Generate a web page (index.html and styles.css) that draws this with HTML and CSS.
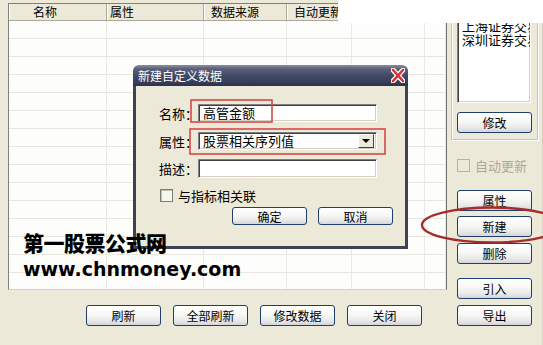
FILE: index.html
```html
<!DOCTYPE html>
<html lang="zh">
<head>
<meta charset="utf-8">
<link rel="stylesheet" href="styles.css">
</head>
<body>
<div class="app">
  <div class="left">
    <div class="table">
      <div class="thead">
        <div class="th c1">名称</div>
        <div class="th c2">属性</div>
        <div class="th c3">数据来源</div>
        <div class="th c4">自动更新</div>
        <div class="th"></div>
        <div class="th"></div>
      </div>
      <div class="tr"><i></i><i></i><i></i><i></i><i></i><i></i></div>
      <div class="tr"><i></i><i></i><i></i><i></i><i></i><i></i></div>
      <div class="tr"><i></i><i></i><i></i><i></i><i></i><i></i></div>
      <div class="tr"><i></i><i></i><i></i><i></i><i></i><i></i></div>
      <div class="tr"><i></i><i></i><i></i><i></i><i></i><i></i></div>
      <div class="tr"><i></i><i></i><i></i><i></i><i></i><i></i></div>
      <div class="tr"><i></i><i></i><i></i><i></i><i></i><i></i></div>
      <div class="tr"><i></i><i></i><i></i><i></i><i></i><i></i></div>
      <div class="tr"><i></i><i></i><i></i><i></i><i></i><i></i></div>
      <div class="tr"><i></i><i></i><i></i><i></i><i></i><i></i></div>
      <div class="tr"><i></i><i></i><i></i><i></i><i></i><i></i></div>
      <div class="tr"><i></i><i></i><i></i><i></i><i></i><i></i></div>
      <div class="tr"><i></i><i></i><i></i><i></i><i></i><i></i></div>
      <div class="tr"><i></i><i></i><i></i><i></i><i></i><i></i></div>
      <div class="tr"><i></i><i></i><i></i><i></i><i></i><i></i></div>
    </div>
    <div class="bottombar">
      <button class="btn">刷新</button>
      <button class="btn">全部刷新</button>
      <button class="btn">修改数据</button>
      <button class="btn">关闭</button>
    </div>
  </div>
  <div class="right">
    <div class="group">
      <div class="listbox">
        <div>上海证券交易所</div>
        <div>深圳证券交易所</div>
      </div>
      <button class="btn">修改</button>
    </div>
    <label class="chk disabled"><span class="box"></span>自动更新</label>
    <button class="btn b-attr">属性</button>
    <button class="btn b-new">新建</button>
    <button class="btn b-del">删除</button>
    <button class="btn b-imp">引入</button>
    <button class="btn b-exp">导出</button>
  </div>
</div>

<div class="patch"></div>

<div class="dialog">
  <div class="titlebar">
    <span class="title">新建自定义数据</span>
    <svg class="close" width="14" height="15" viewBox="0 0 14 15">
      <path d="M2 2 L12 13 M12 2 L2 13" stroke="#ffffff" stroke-width="5" stroke-linecap="round"/>
      <path d="M2 2 L12 13 M12 2 L2 13" stroke="#d8302c" stroke-width="2.6" stroke-linecap="round"/>
    </svg>
  </div>
  <div class="dbody">
    <div class="frow r1">
      <span class="flabel">名称：</span>
      <div class="field">高管金额</div>
    </div>
    <div class="frow r2">
      <span class="flabel">属性：</span>
      <div class="field select">股票相关序列值<span class="drop"><span class="tri"></span></span></div>
    </div>
    <div class="frow r3">
      <span class="flabel">描述：</span>
      <div class="field"></div>
    </div>
    <label class="chk dchk"><span class="box white"></span>与指标相关联</label>
    <div class="dbtns">
      <button class="btn small">确定</button>
      <button class="btn small">取消</button>
    </div>
  </div>
</div>

<div class="watermark">
  <div class="wm-cn">第一股票公式网</div>
  <div class="wm-en">www.chnmoney.com</div>
</div>

<svg class="annot" width="543" height="345" viewBox="0 0 543 345">
  <rect x="191" y="100" width="81" height="22" fill="none" stroke="#d6494a" stroke-width="1.6"/>
  <rect x="190" y="129" width="195" height="25" fill="none" stroke="#d6494a" stroke-width="1.6"/>
  <ellipse cx="492" cy="225" rx="70" ry="17.5" fill="none" stroke="#a62c2b" stroke-width="2.4"/>
</svg>
</body>
</html>
```

FILE: styles.css
```css
body {
  margin: 0;
  width: 543px;
  height: 345px;
  overflow: hidden;
  background: #ECE9D8;
  font-family: "Noto Sans CJK SC", "Noto Sans", sans-serif;
  font-size: 12px;
  color: #000;
  position: relative;
}

.app {
  display: flex;
  height: 345px;
}

.left {
  width: 447px;
  padding: 3px 0 0 8px;
  box-sizing: border-box;
  display: flex;
  flex-direction: column;
}

.table {
  height: 287px;
  box-sizing: border-box;
  border: 1px solid #808080;
  border-bottom-color: #d4d0c8;
  border-right-color: #6f6f6f;
  background: #fdfdfb;
  overflow: hidden;
}

.thead,
.tr {
  display: grid;
  grid-template-columns: 98px 97px 83px 65px 73px 1fr;
}

.thead {
  height: 17px;
  background: #ECE9D8;
  border-bottom: 1px solid #aca899;
  box-sizing: border-box;
}

.th {
  border-right: 1px solid #aca899;
  box-shadow: inset 1px 0 0 #ffffff;
  line-height: 16px;
  white-space: nowrap;
  overflow: hidden;
}

.th.c1 { padding-left: 24px; }
.th.c2 { padding-left: 3px; }
.th.c3 { padding-left: 7px; }
.th.c4 { padding-left: 7px; }

.tr {
  height: 18px;
  box-sizing: border-box;
  border-bottom: 1px solid #e9e7dd;
}

.tr i {
  border-right: 1px solid #ebe9e1;
}

.bottombar {
  display: flex;
  gap: 12px;
  padding: 15px 0 0 78px;
}

.btn {
  width: 75px;
  height: 21px;
  padding: 0;
  box-sizing: border-box;
  border: 1px solid #1f3e6e;
  border-radius: 3px;
  background: linear-gradient(#ffffff 0%, #f7f7f4 45%, #e8e8e6 78%, #d3d4df 100%);
  font-family: "Noto Sans CJK SC", "Noto Sans", sans-serif;
  font-size: 12px;
  line-height: 18px;
  color: #000;
}

.btn.small {
  height: 18px;
  line-height: 15px;
}

.right {
  width: 96px;
  padding-left: 4px;
  box-sizing: border-box;
  display: flex;
  flex-direction: column;
  border-right: 1px solid #d6d2c2;
}

.group {
  margin-top: 8px;
  width: 87px;
  height: 132px;
  box-sizing: border-box;
  border: 1px solid #c9c6b6;
  box-shadow: inset 1px 1px 0 #ffffff, 1px 1px 0 #ffffff;
  padding: 5px 0 0 5px;
  display: flex;
  flex-direction: column;
}

.listbox {
  width: 74px;
  height: 89px;
  box-sizing: border-box;
  background: #fff;
  border: 1px solid #808080;
  border-right-color: #ffffff;
  border-bottom-color: #ffffff;
  box-shadow: inset 1px 1px 0 #404040, inset -1px -1px 0 #d4d0c8;
  padding: 4px 0 0 4px;
  font-size: 13px;
  line-height: 14px;
  white-space: nowrap;
  overflow: hidden;
}

.group .btn {
  margin-top: 9px;
}

.chk {
  display: flex;
  align-items: center;
  gap: 5px;
  height: 13px;
  font-size: 13px;
  white-space: nowrap;
}

.chk .box {
  width: 13px;
  height: 13px;
  box-sizing: border-box;
  border: 1px solid #8e8c80;
  background: #ECE9D8;
  box-shadow: inset 1px 1px 0 #c9c6b9;
}

.chk .box.white {
  background: #f6f5f0;
  border-color: #7d7d78;
  box-shadow: inset 1px 1px 0 #bdbdb4;
}

.chk.disabled {
  color: #aca899;
  margin: 19px 0 0 6px;
}

.chk.disabled .box {
  border-color: #b5b2a4;
  box-shadow: none;
}

.right > .btn { margin-left: 6px; }
.b-attr { margin-top: 18px; }
.b-new { margin-top: 5px; }
.b-del { margin-top: 6px; }
.b-imp { margin-top: 14px; }
.b-exp { margin-top: 6px; }

.patch {
  position: absolute;
  left: 338px;
  top: 0;
  width: 205px;
  height: 23px;
  background: #ffffff;
}

.watermark {
  position: absolute;
  left: 23px;
  top: 232px;
}

.wm-cn {
  font-family: "Noto Sans CJK SC", sans-serif;
  font-weight: 900;
  font-size: 21px;
  line-height: 21px;
  letter-spacing: -0.5px;
}

.wm-en {
  margin-top: 7px;
  font-family: "DejaVu Sans", sans-serif;
  font-weight: bold;
  font-size: 19px;
  line-height: 19px;
}

.dialog {
  position: absolute;
  left: 133px;
  top: 65px;
  width: 275px;
  height: 184px;
  display: flex;
  flex-direction: column;
}

.titlebar {
  height: 21px;
  border-radius: 6px 6px 0 0;
  background: linear-gradient(#8a8fa2 0%, #5b6179 18%, #434a66 50%, #363c58 85%, #2c3049 100%);
  display: flex;
  align-items: center;
  justify-content: space-between;
  padding: 0 3px 0 5px;
}

.title {
  color: #ffffff;
  font-size: 12px;
  line-height: 14px;
}

.close {
  display: block;
}

.dbody {
  flex: 1;
  box-sizing: border-box;
  border: 3px solid #3e4252;
  border-top: 0;
  background: #ECE9D8;
  display: flex;
  flex-direction: column;
}

.frow {
  display: flex;
  align-items: center;
  height: 18px;
}

.r1 { margin-top: 18px; }
.r2 { margin-top: 10px; }
.r3 { margin-top: 9px; height: 19px; }

.flabel {
  width: 62px;
  text-align: right;
  font-size: 13px;
  white-space: nowrap;
}

.field {
  width: 179px;
  height: 100%;
  box-sizing: border-box;
  background: #fff;
  border: 1px solid #808080;
  border-right-color: #ffffff;
  border-bottom-color: #ffffff;
  box-shadow: inset 1px 1px 0 #404040, inset -1px -1px 0 #d4d0c8;
  padding-left: 4px;
  font-size: 13px;
  line-height: 16px;
  display: flex;
  align-items: center;
}

.field.select {
  justify-content: space-between;
  padding-right: 2px;
}

.drop {
  width: 16px;
  height: 14px;
  box-sizing: border-box;
  background: #ECE9D8;
  border: 1px solid;
  border-color: #ffffff #404040 #404040 #ffffff;
  display: flex;
  align-items: center;
  justify-content: center;
}

.tri {
  width: 0;
  height: 0;
  border-left: 4px solid transparent;
  border-right: 4px solid transparent;
  border-top: 4px solid #000;
}

.dchk {
  margin: 11px 0 0 24px;
}

.dbtns {
  display: flex;
  gap: 11px;
  margin-top: 5px;
  padding-left: 96px;
}

.annot {
  position: absolute;
  left: 0;
  top: 0;
  pointer-events: none;
}
```
